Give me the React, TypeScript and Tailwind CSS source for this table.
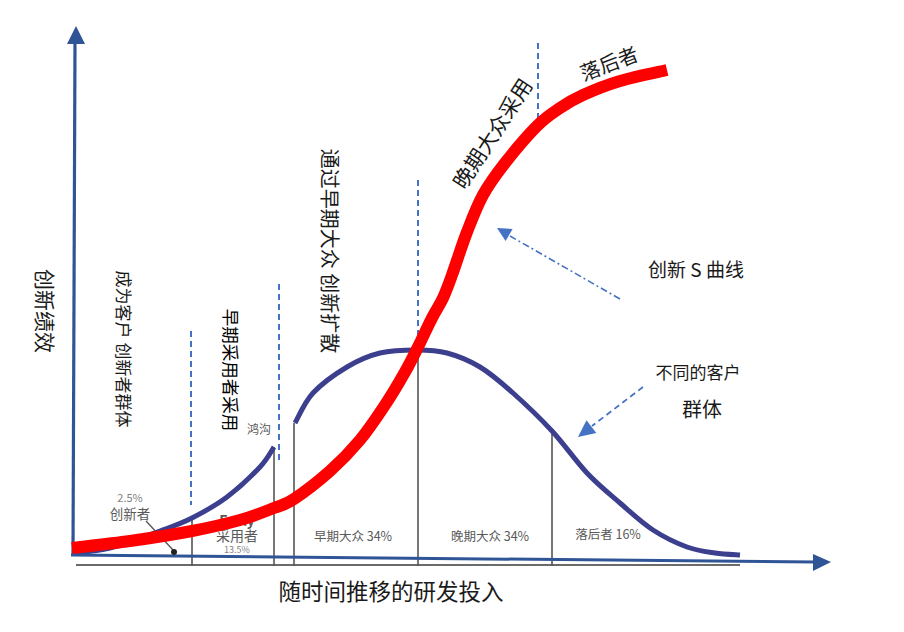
import type { ReactNode } from "react";

type Pt = [number, number];

// catmull-rom -> cubic bezier
function smooth(pts: Pt[]): string {
  let d = `M${pts[0][0]},${pts[0][1]}`;
  for (let i = 0; i < pts.length - 1; i++) {
    const p0 = pts[i - 1] ?? pts[i];
    const p1 = pts[i];
    const p2 = pts[i + 1];
    const p3 = pts[i + 2] ?? p2;
    const c1x = p1[0] + (p2[0] - p0[0]) / 6;
    const c1y = p1[1] + (p2[1] - p0[1]) / 6;
    const c2x = p2[0] - (p3[0] - p1[0]) / 6;
    const c2y = p2[1] - (p3[1] - p1[1]) / 6;
    d += ` C${c1x.toFixed(1)},${c1y.toFixed(1)} ${c2x.toFixed(1)},${c2y.toFixed(1)} ${p2[0]},${p2[1]}`;
  }
  return d;
}

const redCurve = smooth([
  [72, 548], [130, 541], [192, 531], [240, 520], [274, 508], [294, 499],
  [330, 471], [360, 440], [385, 405], [405, 372], [418, 347], [432, 318],
  [443, 298], [452, 275], [467, 232], [483, 195], [505, 163], [537, 126],
  [560, 108], [583, 95], [620, 81], [667, 70],
]);

const bellLeft = smooth([
  [72, 553], [110, 548], [160, 531], [192, 518], [227, 497], [260, 467], [274, 447],
]);

const bellRight = smooth([
  [295, 423], [313, 393], [347, 367], [380, 353], [417, 350], [447, 353],
  [480, 367], [513, 393], [552, 431], [587, 473], [620, 503], [653, 530],
  [687, 547], [715, 553], [740, 555],
]);

function Label({
  children,
  className,
}: {
  children: ReactNode;
  className: string;
}) {
  return (
    <div
      className={`absolute -translate-x-1/2 -translate-y-1/2 whitespace-nowrap leading-none ${className}`}
    >
      {children}
    </div>
  );
}

export default function App() {
  return (
    <div className="relative h-[632px] w-[904px] overflow-hidden bg-white font-['Noto_Sans_CJK_SC','Noto_Sans',sans-serif] text-[#1a1a1a]">
      <svg className="absolute inset-0" width="904" height="632" viewBox="0 0 904 632">
        {/* baseline */}
        <line x1="76" y1="565" x2="740" y2="565" stroke="#6b6b6b" strokeWidth="2" />

        {/* segment separators */}
        <g stroke="#555" strokeWidth="1.6">
          <line x1="192" y1="518" x2="192" y2="566" />
          <line x1="274" y1="447" x2="274" y2="566" />
          <line x1="294" y1="423" x2="294" y2="566" />
          <line x1="418" y1="350" x2="418" y2="566" />
          <line x1="552" y1="431" x2="552" y2="566" />
        </g>

        {/* dashed markers */}
        <g stroke="#4472c4" strokeWidth="2" strokeDasharray="6 4">
          <line x1="191" y1="331" x2="191" y2="505" />
          <line x1="279" y1="284" x2="279" y2="460" />
          <line x1="418" y1="180" x2="418" y2="344" />
          <line x1="538" y1="43" x2="538" y2="122" />
        </g>

        {/* bell curve */}
        <g fill="none" stroke="#3c3f8e" strokeWidth="5" strokeLinecap="butt">
          <path d={bellLeft} />
          <path d={bellRight} />
        </g>

        {/* axes */}
        <line x1="75" y1="40" x2="73" y2="555" stroke="#2f5597" strokeWidth="3.2" />
        <polygon points="76,26 67,44 85,44" fill="#2f5597" />
        <line x1="71" y1="555" x2="815" y2="562" stroke="#2f5597" strokeWidth="3" />
        <polygon points="831,562 813,554 813,571" fill="#2f5597" />

        {/* innovator pointer */}
        <line x1="146" y1="521" x2="174" y2="551" stroke="#555" strokeWidth="1.3" />
        <circle cx="174" cy="552" r="3" fill="#222" />

        {/* S-curve callout */}
        <line
          x1="620"
          y1="299"
          x2="510"
          y2="236"
          stroke="#4472c4"
          strokeWidth="1.6"
          strokeDasharray="7 3 2 3"
        />
        <polygon points="497,228 512.6,228.9 505.6,241.1" fill="#4472c4" />

        {/* customer group callout */}
        <line
          x1="643"
          y1="387"
          x2="592"
          y2="426"
          stroke="#4472c4"
          strokeWidth="1.8"
          strokeDasharray="6 4"
        />
        <polygon points="578,437 596.3,432.9 586.5,420.3" fill="#4472c4" />
      </svg>

      {/* vertical labels */}
      <Label className="left-[45px] top-[311px] rotate-90 text-[21px]">创新绩效</Label>
      <Label className="left-[124px] top-[349px] rotate-90 text-[17px]">成为客户 创新者群体</Label>
      <Label className="left-[231px] top-[370px] rotate-90 text-[17.5px] text-black">早期采用者采用</Label>
      <Label className="left-[330px] top-[251px] rotate-90 text-[20px]">通过早期大众 创新扩散</Label>

      {/* slanted labels */}
      <Label className="left-[492px] top-[133px] rotate-[-57deg] text-[21px]">晚期大众采用</Label>
      <Label className="left-[609px] top-[63px] rotate-[-21deg] text-[20px]">落后者</Label>

      {/* callouts */}
      <Label className="left-[696px] top-[268px] text-[19px]">创新 S 曲线</Label>
      <Label className="left-[698px] top-[391px] flex flex-col items-center gap-[19px]">
        <span className="text-[17px]">不同的客户</span>
        <span className="pl-[8px] text-[20px]">群体</span>
      </Label>

      {/* segment labels */}
      <Label className="left-[259px] top-[429px] text-[12px] text-[#595959]">鸿沟</Label>
      <Label className="left-[130px] top-[506px] flex flex-col items-center gap-[4px] text-[#595959]">
        <span className="text-[11px] text-[#7f7f7f]">2.5%</span>
        <span className="text-[13.5px]">创新者</span>
      </Label>
      <Label className="left-[237px] top-[533px] flex flex-col items-center gap-[1px] text-[#595959]">
        <span className="text-[14px] font-bold">Early</span>
        <span className="text-[14px]">采用者</span>
        <span className="pt-[2px] text-[9px] text-[#7f7f7f]">13.5%</span>
      </Label>
      <Label className="left-[353px] top-[536px] text-[12.5px] text-[#595959]">早期大众 34%</Label>
      <Label className="left-[490px] top-[536px] text-[12.5px] text-[#595959]">晚期大众 34%</Label>
      <Label className="left-[608px] top-[534px] text-[12.5px] text-[#595959]">落后者 16%</Label>

      {/* x axis title */}
      <Label className="left-[391px] top-[590px] text-[22.5px]">随时间推移的研发投入</Label>

      {/* red S curve sits above everything */}
      <svg className="pointer-events-none absolute inset-0" width="904" height="632" viewBox="0 0 904 632">
        <path d={redCurve} fill="none" stroke="#ff0000" strokeWidth="12" strokeLinecap="butt" />
      </svg>
    </div>
  );
}
